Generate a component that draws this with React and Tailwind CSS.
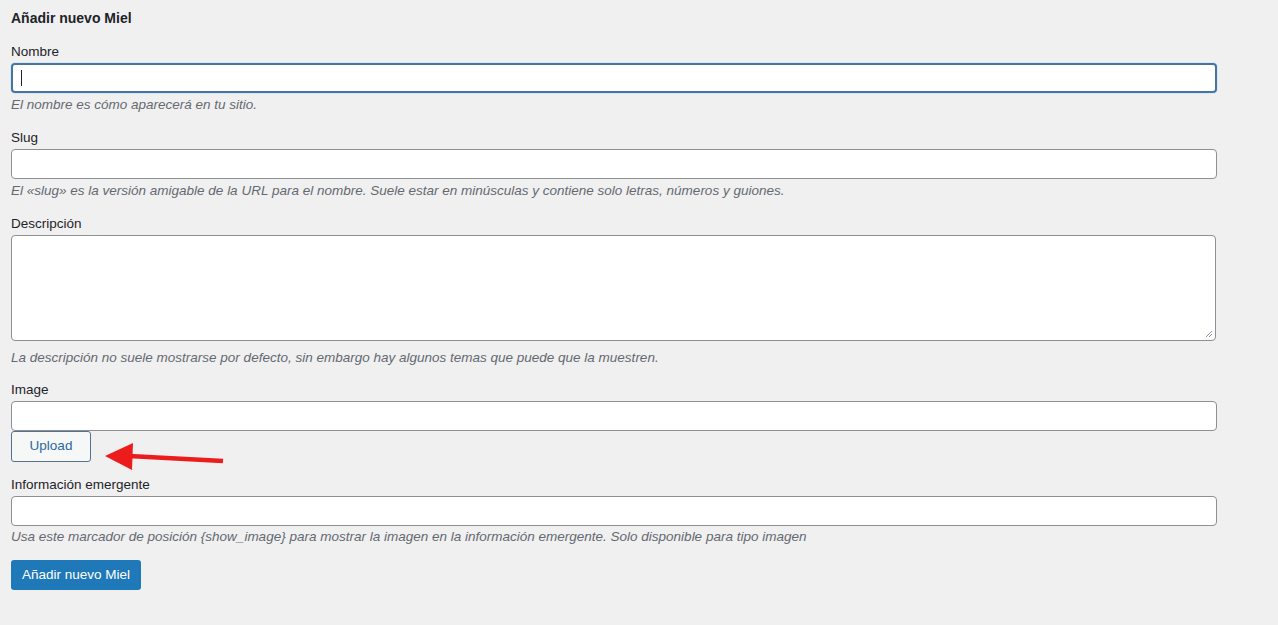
import React from "react";

const font = { fontFamily: '"Liberation Sans", Arial, sans-serif' };

function Label({ children }) {
  return <label className="block text-[13.5px] leading-[18px] text-[#1d2327]">{children}</label>;
}

function Help({ children, className = "" }) {
  return (
    <p className={`text-[13.5px] leading-[18px] italic text-[#646970] ${className}`}>{children}</p>
  );
}

function Input() {
  return (
    <div className="mt-[2px] h-[30px] w-[1206px] rounded-[4px] border border-[#8c8f94] bg-white" />
  );
}

export default function App() {
  return (
    <div
      className="min-h-[625px] w-full bg-[#f0f0f1] pl-[11px] pt-[9px] text-[#1d2327]"
      style={font}
    >
      <h2 className="text-[14px] font-semibold leading-[18px]">Añadir nuevo Miel</h2>

      <div className="mt-[16px]">
        <Label>Nombre</Label>
        <div className="mt-[2px] flex h-[30px] w-[1206px] items-center rounded-[4px] border-2 border-[#46759f] bg-white shadow-[0_0_0_1px_#dbe7f2]">
          <span className="ml-[8px] h-[16px] w-px bg-[#1d2327]" />
        </div>
        <Help className="mt-[3px]">El nombre es cómo aparecerá en tu sitio.</Help>
      </div>

      <div className="mt-[15px]">
        <Label>Slug</Label>
        <Input />
        <Help className="mt-[3px]">
          El «slug» es la versión amigable de la URL para el nombre. Suele estar en minúsculas y contiene solo letras, números y guiones.
        </Help>
      </div>

      <div className="mt-[15px]">
        <Label>Descripción</Label>
        <div className="relative mt-[2px] h-[106px] w-[1205px] rounded-[4px] border border-[#8c8f94] bg-white">
          <svg className="absolute bottom-[2px] right-[2px]" width="8" height="8" viewBox="0 0 8 8">
            <path d="M7 1 L1 7 M7 4 L4 7" stroke="#8c8f94" strokeWidth="1" />
          </svg>
        </div>
        <Help className="mt-[8px]">
          La descripción no suele mostrarse por defecto, sin embargo hay algunos temas que puede que la muestren.
        </Help>
      </div>

      <div className="mt-[14px]">
        <Label>Image</Label>
        <div className="mt-[2px] h-[30px] w-[1206px] rounded-[4px] border border-[#8c8f94] bg-white" />
        <div className="flex items-start">
          <button className="h-[31px] w-[80px] rounded-[3px] border border-[#56718a] bg-[#f6f7f7] text-[13.5px] text-[#2a6a9c]">
            Upload
          </button>
          <svg className="ml-[14px] overflow-visible" width="120" height="30" viewBox="0 0 120 30">
            <line x1="24" y1="25" x2="118" y2="30" stroke="#ec1c1c" strokeWidth="4.5" />
            <polygon points="0,25 28,12 27,39" fill="#ec1c1c" />
          </svg>
        </div>
      </div>

      <div className="mt-[14px]">
        <Label>Información emergente</Label>
        <Input />
        <Help className="mt-[2px]">
          Usa este marcador de posición {"{show_image}"} para mostrar la imagen en la información emergente. Solo disponible para tipo imagen
        </Help>
      </div>

      <button className="mt-[14px] h-[30px] w-[130px] rounded-[3px] bg-[#1f78b8] text-[13.5px] font-normal text-white">
        Añadir nuevo Miel
      </button>
    </div>
  );
}
